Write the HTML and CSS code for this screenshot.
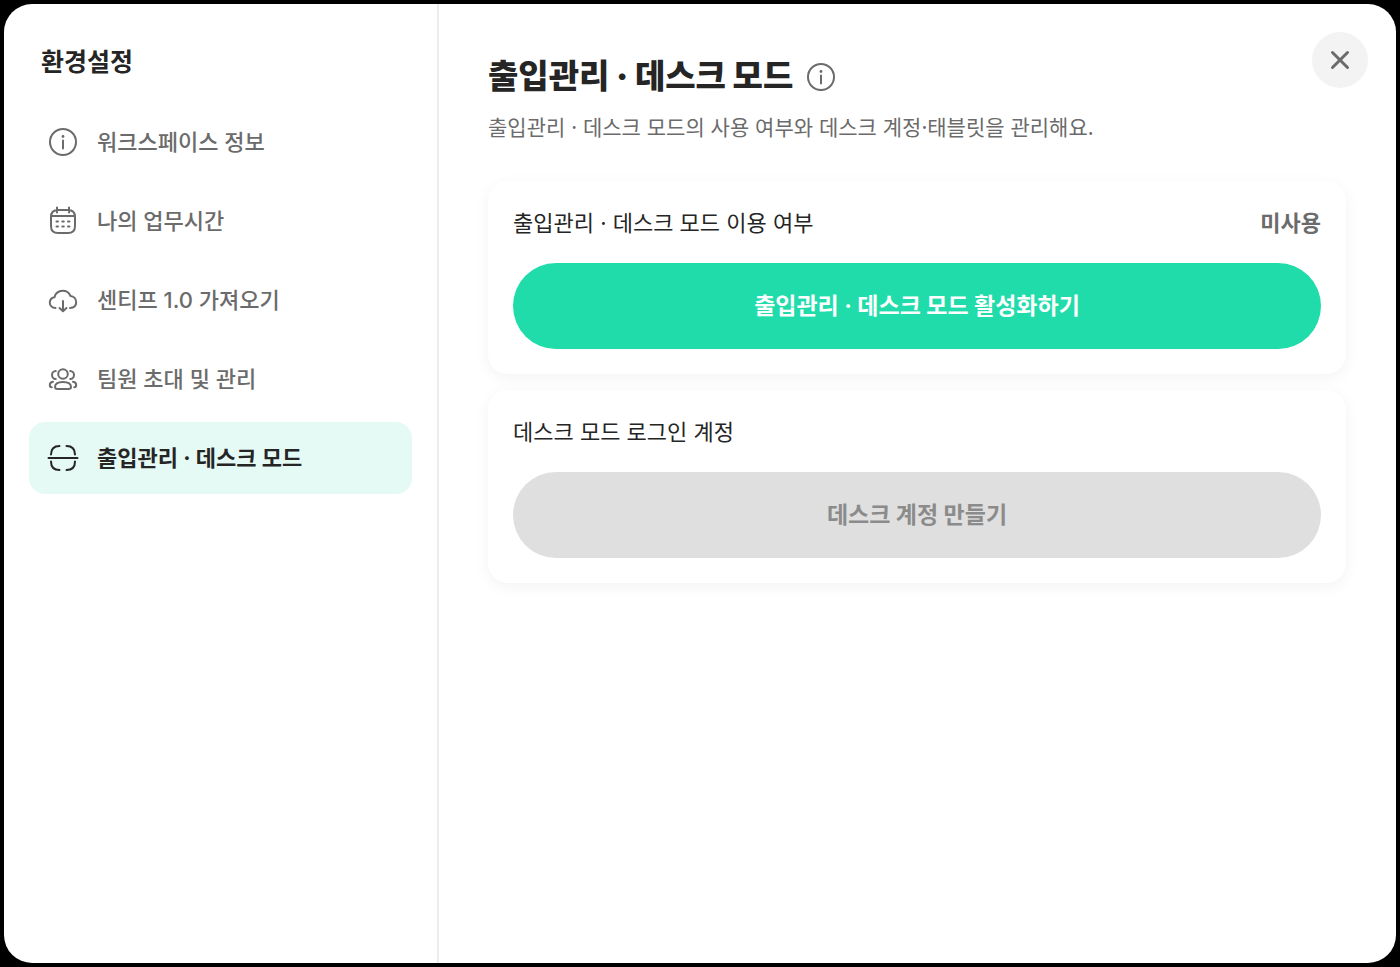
FILE: index.html
```html
<!DOCTYPE html>
<html lang="ko">
<head>
  <meta charset="UTF-8">
  <meta name="viewport" content="width=device-width, initial-scale=1.0">
  <title>환경설정</title>
  <link rel="stylesheet" href="styles.css">
</head>
<body>

  <div class="modal">
    <aside class="sidebar">
      <h2>환경설정</h2>

      <nav class="menu">
        <a href="#workspace">
          <svg class="icon" viewBox="0 0 32 32">
            <circle cx="16" cy="16" r="13"/>
            <path d="M16 14.500v8"/>
            <circle class="dot" cx="16" cy="10.500" r="1.400"/>
          </svg>
          <span>워크스페이스 정보</span>
        </a>
        <a href="#worktime">
          <svg class="icon" viewBox="0 0 32 32">
            <path d="M11 5h10q7 0 7 7v9q0 7-7 7H11q-7 0-7-7v-9q0-7 7-7zM4 11h24M10 2.500v5M22 2.500v5"/>
            <path d="M9.500 16.500h1.500M15.300 16.500h1.500M21 16.500h1.500M9.500 21.500h1.500M15.300 21.500h1.500M21 21.500h1.500"/>
          </svg>
          <span>나의 업무시간</span>
        </a>
        <a href="#import">
          <svg class="icon" viewBox="0 0 32 32">
            <path d="M8.500 24C5 24 2.800 21.500 2.800 18.700c0-2.900 2-5 4.700-5.400C8 9.500 11.500 6.800 15.500 6.800c3.900 0 6.700 2 7.900 5.100 3.400.4 5.800 3 5.800 6.200 0 3.500-2.300 5.900-6.200 5.900"/>
            <path d="M16 17v9.800M12.500 24l3.500 3.200 3.500-3.200"/>
          </svg>
          <span>센티프 1.0 가져오기</span>
        </a>
        <a href="#members">
          <svg class="icon" viewBox="0 0 32 32">
            <circle cx="16" cy="11" r="4.800"/>
            <path d="M8 24c0-3.500 2.500-5 8-5s8 1.500 8 5c0 1.500-1 2-2.500 2h-11C9 26 8 25.500 8 24z"/>
            <path d="M8.800 8C6.500 8 5 9.800 5 12s1.500 4 3.800 4M23.200 8c2.300 0 3.800 1.800 3.800 4s-1.500 4-3.800 4"/>
            <path d="M6 18.800C4 19 2.800 20.300 2.800 22.300c0 1.400.7 2 2 2M26 18.800c2 .2 3.200 1.500 3.200 3.500 0 1.400-.7 2-2 2"/>
          </svg>
          <span>팀원 초대 및 관리</span>
        </a>
        <a href="#desk" class="active">
          <svg class="icon" viewBox="0 0 32 32">
            <path d="M1.500 16h29M4 12.500C4 7 7 4 12.500 4M19.500 4c5.500 0 8.500 3 8.500 8.500M4 19.500c0 5.500 3 8.500 8.500 8.500M19.500 28c5.500 0 8.500-3 8.500-8.500"/>
          </svg>
          <span>출입관리 · 데스크 모드</span>
        </a>
      </nav>
    </aside>

    <main class="content">
      <button type="button" class="close" aria-label="닫기">
        <svg viewBox="0 0 24 24"><path d="M4.500 4.500l15 15M19.500 4.500l-15 15"/></svg>
      </button>

      <div class="title">
        <h1>출입관리 · 데스크 모드</h1>
        <svg class="icon" viewBox="0 0 32 32">
          <circle cx="16" cy="16" r="13"/>
          <path d="M16 14.500v8"/>
          <circle class="dot" cx="16" cy="10.500" r="1.400"/>
        </svg>
      </div>
      <p class="desc">출입관리 · 데스크 모드의 사용 여부와 데스크 계정·태블릿을 관리해요.</p>

      <div class="cards">
        <section class="card">
          <div class="card-head">
            <span>출입관리 · 데스크 모드 이용 여부</span>
            <strong>미사용</strong>
          </div>
          <button type="button" class="btn">출입관리 · 데스크 모드 활성화하기</button>
        </section>

        <section class="card">
          <div class="card-head">
            <span>데스크 모드 로그인 계정</span>
          </div>
          <button type="button" class="btn" disabled>데스크 계정 만들기</button>
        </section>
      </div>
    </main>
  </div>

</body>
</html>
```
FILE: styles.css
```css
* {
  box-sizing: border-box;
}

body {
  margin: 0;
  padding: 4px;
  min-height: 100vh;
  display: flex;
  background: #000;
  color: #252525;
  font-family: Inter, "Noto Sans CJK KR", sans-serif;
}

h1, h2, p {
  margin: 0;
}

.modal {
  position: relative;
  flex: 1;
  display: flex;
  background: #fff;
  border-radius: 28px;
  overflow: hidden;
}

/* Sidebar */
.sidebar {
  width: 435px;
  flex-shrink: 0;
  padding: 40px 25px;
  border-right: 2px solid #ececec;
}

.sidebar h2 {
  padding-left: 12px;
  font-size: 25px;
  line-height: 36px;
}

.menu {
  display: flex;
  flex-direction: column;
  gap: 7px;
  margin-top: 26px;
}

.menu a {
  display: flex;
  align-items: center;
  gap: 18px;
  height: 72px;
  padding: 0 18px;
  border-radius: 16px;
  color: #6b6b6b;
  font-size: 22px;
  font-weight: 500;
  line-height: 34px;
  text-decoration: none;
}

.menu a.active {
  background: #e5faf5;
  color: #252525;
  font-weight: 700;
}

.icon {
  width: 32px;
  height: 32px;
  flex-shrink: 0;
  fill: none;
  stroke: currentColor;
  stroke-width: 2;
  stroke-linecap: round;
  stroke-linejoin: round;
}

.icon .dot {
  fill: currentColor;
  stroke: none;
}

/* Content */
.content {
  flex: 1;
  padding: 48px 50px 48px 49px;
}

.close {
  position: absolute;
  top: 28px;
  right: 28px;
  width: 56px;
  height: 56px;
  padding: 16px;
  border: none;
  border-radius: 50%;
  background: #f3f3f3;
  cursor: pointer;
}

.close svg {
  display: block;
  width: 24px;
  height: 24px;
  fill: none;
  stroke: #6b6b6b;
  stroke-width: 3;
  stroke-linecap: round;
}

.title {
  display: flex;
  align-items: center;
  gap: 12px;
}

.title h1 {
  font-size: 33px;
  font-weight: 900;
  line-height: 49px;
}

.title .icon {
  color: #6b6b6b;
}

.desc {
  margin-top: 10px;
  color: #6b6b6b;
  font-family: "Noto Sans CJK KR", sans-serif;
  font-size: 21px;
  line-height: 30px;
}

.cards {
  display: flex;
  flex-direction: column;
  gap: 16px;
  margin-top: 40px;
}

.card {
  padding: 25px;
  border-radius: 20px;
  background: #fff;
  box-shadow: 0 4px 16px rgba(0, 0, 0, 0.05);
}

.card-head {
  display: flex;
  justify-content: space-between;
  font-size: 22px;
  line-height: 34px;
}

.card-head strong {
  color: #6b6b6b;
}

.btn {
  display: block;
  width: 100%;
  height: 86px;
  margin-top: 23px;
  border: none;
  border-radius: 43px;
  background: #20dcaa;
  color: #fff;
  font-family: inherit;
  font-size: 23px;
  font-weight: 700;
  line-height: 34px;
  cursor: pointer;
}

.btn:disabled {
  background: #dfdfdf;
  color: #8b8b8b;
  cursor: default;
}
```
